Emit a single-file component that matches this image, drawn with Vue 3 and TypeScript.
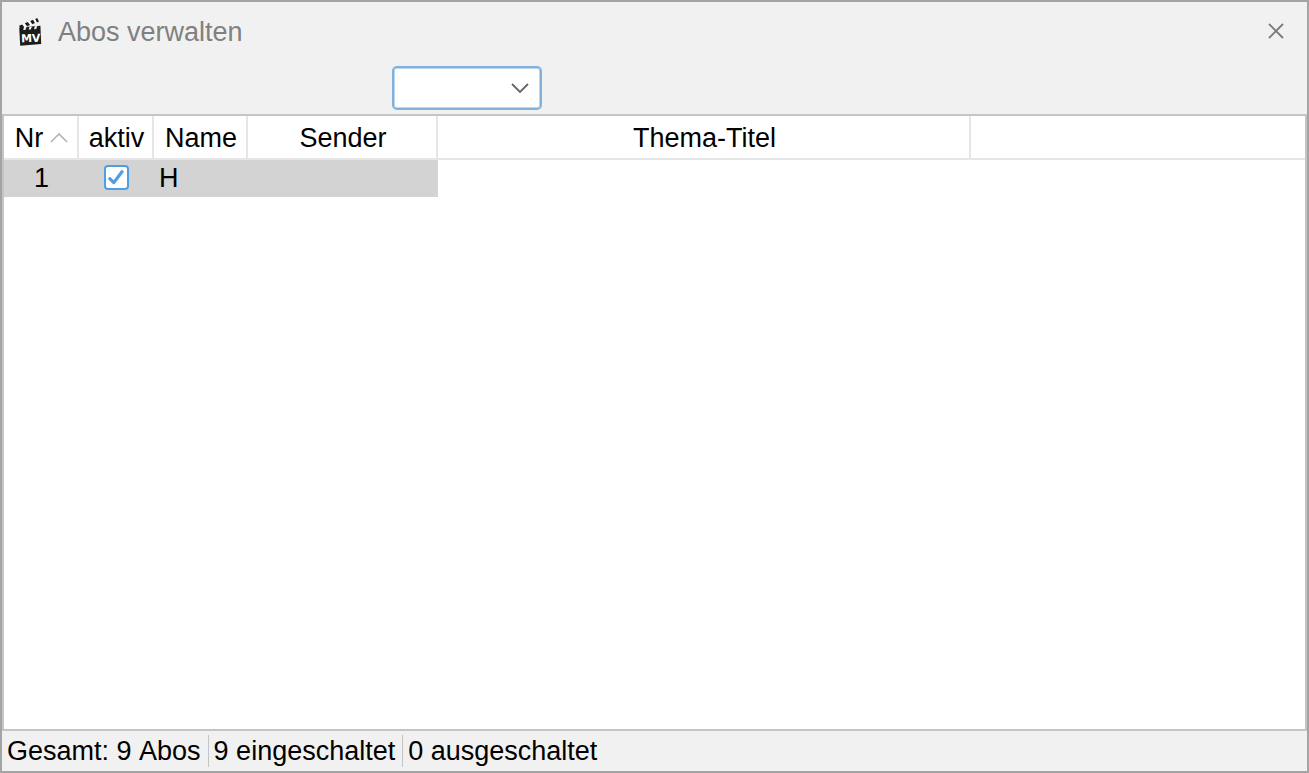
<script setup lang="ts">
import { ref } from 'vue'

interface Abo {
  nr: number
  aktiv: boolean
  name: string
  sender: string
}

const abos = ref<Abo[]>([{ nr: 1, aktiv: true, name: 'H', sender: '' }])
const status: string[] = ['Gesamt: 9 Abos', '9 eingeschaltet', '0 ausgeschaltet']
const filter = ref('')
</script>

<template>
  <main class="window">
    <header class="titlebar">
      <svg class="logo" viewBox="0 0 24 30" aria-hidden="true">
        <path d="M1 8.8 L19.2 1 L21 4.6 L2.6 11.6 Z" fill="#fff" />
        <path d="M1 8.8 L4.2 7.4 L6.4 10.2 L2.6 11.6 Z M6.8 6.3 L9.8 5 L12 8.1 L9 9.2 Z M12.2 4 L15 2.8 L17 6.1 L14.2 7.2 Z M17.2 1.9 L19.2 1 L21 4.6 L19 5.4 Z" fill="#1c1c1c" />
        <path d="M1.2 10.4 L22.4 8.8 L23.2 27 L2.2 28.8 Z" fill="#1c1c1c" />
        <path d="M6 10.1 L8.6 9.9 L7.4 12.9 L5.2 13 Z M11.4 9.7 L14 9.5 L12.8 12.5 L10.6 12.6 Z M16.8 9.3 L19.4 9.1 L18.2 12.1 L16 12.2 Z" fill="#eee" />
        <text x="3" y="25" transform="rotate(-2 12 20)">MV</text>
      </svg>
      <h1>Abos verwalten</h1>
      <button class="close" type="button" aria-label="Schließen">
        <svg viewBox="0 0 18 18"><path d="M2 2 L16 16 M16 2 L2 16" /></svg>
      </button>
    </header>

    <div class="toolbar">
      <div class="combo">
        <select v-model="filter" aria-label="Sender">
          <option value=""></option>
        </select>
        <svg viewBox="0 0 18 12" aria-hidden="true"><path d="M1 2 L9 10 L17 2" /></svg>
      </div>
    </div>

    <section class="list">
      <table>
        <colgroup>
          <col class="c-nr" /><col class="c-aktiv" /><col class="c-name" />
          <col class="c-sender" /><col class="c-thema" /><col />
        </colgroup>
        <thead>
          <tr>
            <th>
              <span class="sorted">Nr
                <svg viewBox="0 0 18 12" aria-hidden="true"><path d="M1 10 L9 2 L17 10" /></svg>
              </span>
            </th>
            <th>aktiv</th>
            <th>Name</th>
            <th>Sender</th>
            <th>Thema-Titel</th>
            <th></th>
          </tr>
        </thead>
        <tbody>
          <tr v-for="abo in abos" :key="abo.nr">
            <td class="sel mid">{{ abo.nr }}</td>
            <td class="sel mid">
              <label class="check">
                <input v-model="abo.aktiv" type="checkbox" aria-label="aktiv" />
                <svg v-if="abo.aktiv" viewBox="0 0 25 25" aria-hidden="true"><path d="M5.8 13.6 L9.8 17.6 L18 6.8" /></svg>
              </label>
            </td>
            <td class="sel">{{ abo.name }}</td>
            <td class="sel">{{ abo.sender }}</td>
            <td></td>
            <td></td>
          </tr>
        </tbody>
      </table>
    </section>

    <footer class="status">
      <span v-for="text in status" :key="text">{{ text }}</span>
    </footer>
  </main>
</template>

<style>
body {
  margin: 0;
}
</style>

<style scoped>
.window {
  box-sizing: border-box;
  display: flex;
  flex-direction: column;
  min-height: 100vh;
  border: 2px solid #a4a4a4;
  background: #f1f1f1;
  color: #000;
  font: 27px/32px "Liberation Sans", Arial, sans-serif;
}

.titlebar {
  display: flex;
  align-items: center;
  height: 58px;
  padding: 0 22px 0 16px;
}

.logo {
  width: 24px;
  height: 30px;
  padding-top: 2px;
}

.logo text {
  fill: #fff;
  font: bold 11px "DejaVu Sans", sans-serif;
}

h1 {
  flex: 1;
  margin: 0 0 0 16px;
  padding-top: 2px;
  color: #808080;
  font-size: 27px;
  font-weight: 400;
}

.close {
  display: flex;
  padding: 0;
  border: 0;
  background: none;
}

.close svg {
  width: 18px;
  height: 18px;
  fill: none;
  stroke: #7a7a7a;
  stroke-width: 1.8;
}

.toolbar {
  display: flex;
  padding: 6px 0 4px 390px;
}

.combo {
  position: relative;
  width: 150px;
  height: 44px;
}

.combo select {
  box-sizing: border-box;
  width: 100%;
  height: 100%;
  padding: 0 36px 0 8px;
  appearance: none;
  border: 2px solid #84b1dc;
  border-radius: 5px;
  outline: 0;
  background: #fff;
  box-shadow: inset 0 0 0 1px #b9d8f0;
  font: inherit;
}

.combo svg {
  position: absolute;
  top: 16px;
  right: 13px;
  width: 18px;
  height: 12px;
  fill: none;
  stroke: #666;
  stroke-width: 1.8;
  pointer-events: none;
}

.list {
  flex: 1;
  border: 2px solid #c4c4c4;
  background: #fff;
}

table {
  width: 100%;
  table-layout: fixed;
  border-collapse: separate;
  border-spacing: 0;
}

.c-nr,
.c-aktiv {
  width: 75px;
}

.c-name {
  width: 94px;
}

.c-sender {
  width: 190px;
}

.c-thema {
  width: 533px;
}

th {
  height: 40px;
  padding: 2px 0 0 2px;
  border-right: 2px solid #e6e6e6;
  border-bottom: 2px solid #e6e6e6;
  font-weight: 400;
  text-align: center;
}

th:last-child {
  border-right: 0;
}

.sorted {
  display: flex;
  align-items: center;
  justify-content: center;
  gap: 7px;
}

.sorted svg {
  width: 18px;
  height: 12px;
  fill: none;
  stroke: #b4b4b4;
  stroke-width: 1.6;
}

td {
  height: 35px;
  padding: 0 0 2px 5px;
}

.mid {
  padding-left: 0;
  text-align: center;
}

.sel {
  background: #d3d3d3;
}

.check {
  position: relative;
  display: block;
  width: 25px;
  height: 25px;
  margin: 0 auto;
}

.check input {
  box-sizing: border-box;
  display: block;
  width: 25px;
  height: 25px;
  margin: 0;
  appearance: none;
  border: 2px solid #4f9ee3;
  border-radius: 4px;
  background: #fff;
}

.check svg {
  position: absolute;
  inset: 0;
  fill: none;
  stroke: #4f9ee3;
  stroke-width: 3.2;
  stroke-linecap: round;
  stroke-linejoin: round;
  pointer-events: none;
}

.status {
  display: flex;
  align-items: center;
  height: 40px;
  font-kerning: none;
}

.status span {
  padding: 0 7px 0 5px;
  border-right: 1px solid #c4c4c4;
}

.status span:last-child {
  border-right: 0;
}
</style>
